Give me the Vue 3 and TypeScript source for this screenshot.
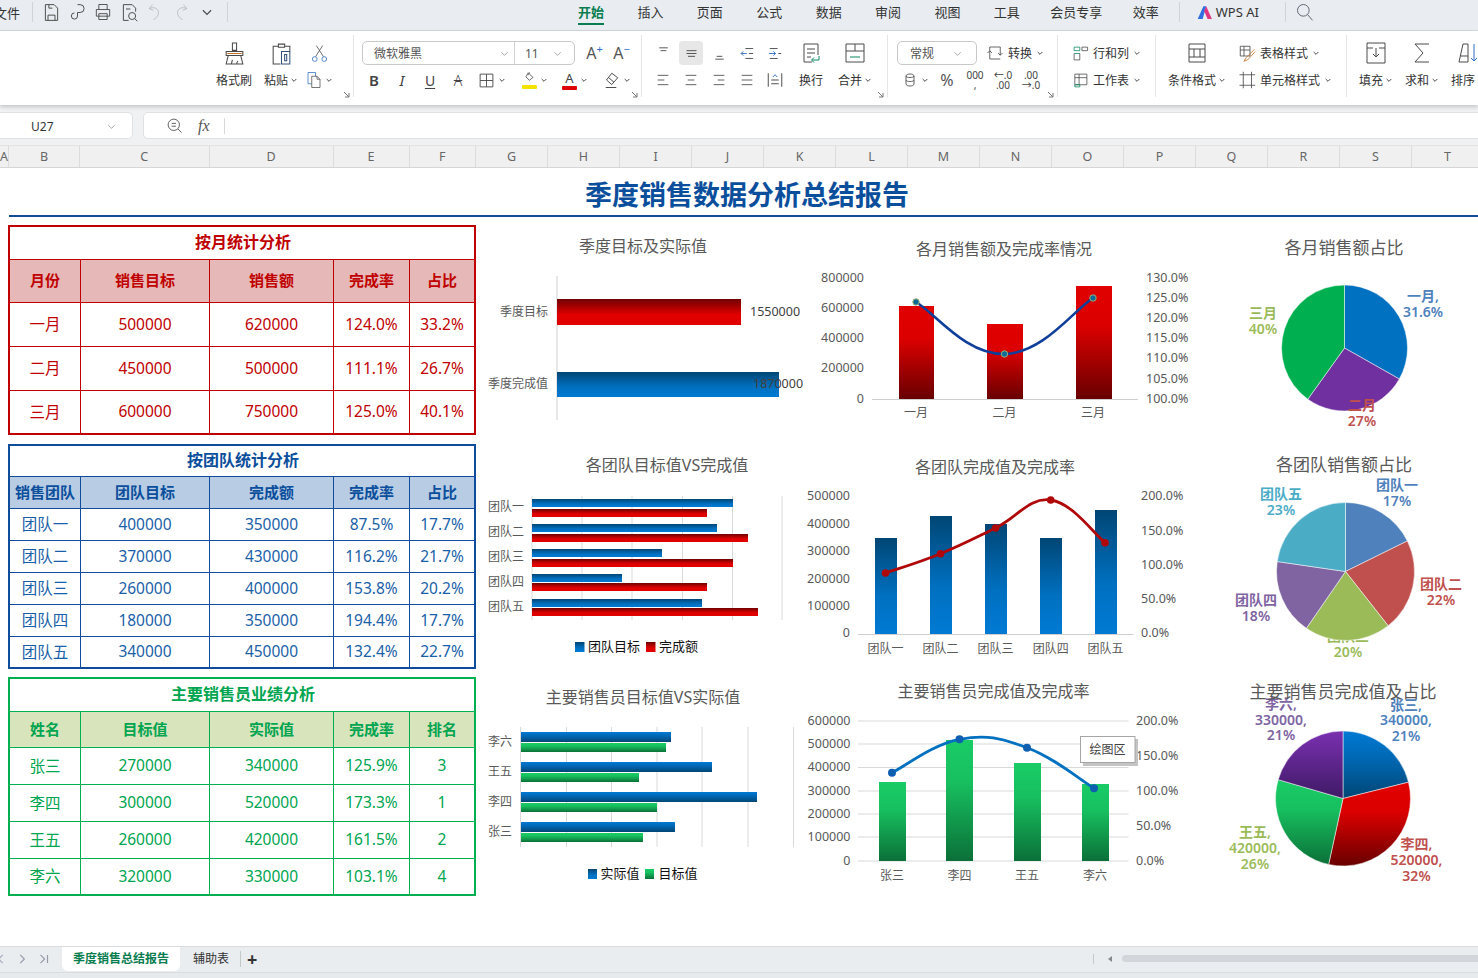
<script setup lang="ts">
import { h } from 'vue'
import type { FunctionalComponent } from 'vue'

/* ---------- icons ---------- */
type Seg = [string, string?, string?]
const G = '#0a8a5c', B = '#2f6fc4', O = '#c9762b'
const icons: Record<string, Seg[]> = {
  save: [['M5 3h10l4 4v14H5z M8 21v-6h8v6 M9 3v4h4']],
  link: [['M12 3h3a4 4 0 0 1 0 9h-3v4a3.5 3.5 0 1 1-3.5-3.5']],
  print: [['M7 9V3h10v6 M4 9h16v8H4z M7 14h10v7H7z']],
  preview: [['M11 21H5V3h10l4 4v4 M8 8h5'], ['M15 12a4 4 0 1 0 0 8 4 4 0 0 0 0-8z M18 19l3 3']],
  undo: [['M9 3 5 8l5 2 M5 8c6-3 12 0 11 6-.5 3-3 6-6 7', '#b9bec4']],
  redo: [['M15 3l4 5-5 2 M19 8C13 5 7 8 8 14c.5 3 3 6 6 7', '#b9bec4']],
  chev: [['M5 9l7 7 7-7']],
  search: [['M10 3a7 7 0 1 0 0 14 7 7 0 0 0 0-14z M15 15l6 7']],
  ai: [['M1 21 9 3h4L8 21z', 'none', '#2f6fe0'], ['M13 3l8 18h-6L10 10z', 'none', '#e0357f']],
  brush: [['M10 2h4v7h-4z M4 10h16v4H4z M6 14l-2 8h16l-2-8 M9 22l1-4 M14 22l1-3'], ['M5 12h14', O]],
  paste: [['M9 3h6v3H9z M9 5H4v17h7 M15 5h5v5'], ['M12 10h8v12h-8z M15 13h2v6h-2z', '#33527a']],
  cut: [['M8 2l9 14 M16 2 7 16'], ['M6 16a3 3 0 1 0 0 6 3 3 0 0 0 0-6z M18 16a3 3 0 1 0 0 6 3 3 0 0 0 0-6z', B]],
  copy: [['M4 2h10v5 M4 2v15h5', B], ['M9 7h7l4 4v11H9z M16 7v4h4']],
  border: [['M3 3h18v18H3z M12 3v18 M3 12h18']],
  bucket: [['M9 3l8 8-6 5-6-6z M12 3c-2 0-3 2-3 4']],
  erase: [['M13 3l8 6-8 9-7-6z M9 9l7 6 M5 22h14']],
  at: [['M6 4h12 M8 8h8']],
  am: [['M5 8h14 M5 12h14 M7 16h10']],
  ab: [['M8 16h8 M6 20h12']],
  l1: [['M4 5h16 M4 12h10 M4 19h16']],
  l2: [['M4 5h16 M7 12h10 M4 19h16']],
  l3: [['M4 5h16 M10 12h10 M4 19h16']],
  l4: [['M4 5h16 M4 12h16 M4 19h16']],
  ind1: [['M9 5h11 M14 12h6 M9 19h11'], ['M11 12H3 M6 9l-3 3 3 3', B]],
  ind2: [['M4 5h11 M4 19h11 M16 12h4'], ['M3 12h9 M9 9l3 3-3 3', B]],
  dist: [['M3 3v18 M21 3v18 M7 12h10 M7 17h10'], ['M9 8l3-3 3 3', B]],
  wrap: [['M5 3h14v11 M5 3v18h8 M8 8h8 M8 12h8 M8 16h4'], ['M20 15v4h-7 M15 16.5 12.5 19l2.5 2.5', G]],
  merge: [['M3 3h18v18H3z M3 10h18 M12 3v7'], ['M7 16h10', G]],
  convert: [['M5 9V4h14v11 M16 12l3 3 3-3 M19 20H5V9 M2 12l3-3 3 3']],
  db: [['M6 6c0-4 12-4 12 0v12c0 4-12 4-12 0z M6 6c0 3 12 3 12 0 M6 12c0 3 12 3 12 0']],
  rowcol: [['M3 3h8v5H3z M3 12h8', G], ['M3 12v9h8v-9 M14 3h8v5h-8z']],
  sheet: [['M4 3h17v15H4z M4 8h17 M10 3v15'], ['M4 18h7v3H4z', G]],
  tstyle: [['M3 3h13v13H3z M3 8h13 M8 3v13'], ['M22 7 11 18l-3 5 5-2L23 10', O]],
  cstyle: [['M7 1v22 M18 1v22 M2 5h21 M2 19h21']],
  cond: [['M4 3h16v18H4z M4 8h5 M15 8h5 M4 16h5 M15 16h5 M9 8h6v8H9z']],
  fill: [['M3 2h18v20H3z M3 7h6 M15 7h6 M12 7v9 M9 13l3 3 3-3']],
  sum: [['M19 3H5l8 9-8 9h14']],
  sort: [['M3 21 7 3h5v18H3z M5 15h7'], ['M18 3v17 M15 17l3 3 3-3', B]],
  left: [['M15 5l-7 7 7 7']],
  right: [['M9 5l7 7-7 7']],
  last: [['M6 5l7 7-7 7 M18 5v14']],
  zoom: [['M11 3a8 8 0 1 0 0 16 8 8 0 0 0 0-16z M17 17l5 5 M8 9h6 M8 13h6']]
}
const Ic: FunctionalComponent<{ n: string; s?: number; sw?: number; c?: string }> = (p) =>
  h('svg', { width: p.s ?? 16, height: p.s ?? 16, viewBox: '0 0 24 24', style: 'flex:none;display:block' },
    icons[p.n].map(([d, c, f]) =>
      h('path', { d, fill: f ?? 'none', stroke: c ?? p.c ?? '#4a4a4a', 'stroke-width': p.sw ?? 1.3 })))

/* ---------- sheet header ---------- */
const cols: [string, number][] = [['A', 9], ['B', 71], ['C', 129.5], ['D', 124], ['E', 76], ['F', 66.5],
  ...'GHIJKLMNOPQRST'.split('').map((l): [string, number] => [l, 72])]
const menu = ['插入', '页面', '公式', '数据', '审阅', '视图', '工具', '会员专享', '效率']

/* ---------- tables ---------- */
const tables = [
  { cls: 't-red', title: '按月统计分析', head: ['月份', '销售目标', '销售额', '完成率', '占比'],
    h: [33, 43, 44, 44, 42],
    rows: [['一月', '500000', '620000', '124.0%', '33.2%'], ['二月', '450000', '500000', '111.1%', '26.7%'], ['三月', '600000', '750000', '125.0%', '40.1%']] },
  { cls: 't-blue', title: '按团队统计分析', head: ['销售团队', '团队目标', '完成额', '完成率', '占比'],
    h: [31, 32, 32, 32, 32, 32, 30],
    rows: [['团队一', '400000', '350000', '87.5%', '17.7%'], ['团队二', '370000', '430000', '116.2%', '21.7%'], ['团队三', '260000', '400000', '153.8%', '20.2%'], ['团队四', '180000', '350000', '194.4%', '17.7%'], ['团队五', '340000', '450000', '132.4%', '22.7%']] },
  { cls: 't-green', title: '主要销售员业绩分析', head: ['姓名', '目标值', '实际值', '完成率', '排名'],
    h: [33, 36, 37, 37, 37, 35],
    rows: [['张三', '270000', '340000', '125.9%', '3'], ['李四', '300000', '520000', '173.3%', '1'], ['王五', '260000', '420000', '161.5%', '2'], ['李六', '320000', '330000', '103.1%', '4']] }
]

/* ---------- chart primitives ---------- */
interface Item { t: 'text' | 'rect' | 'path' | 'circle'; x?: number; y?: number; w?: number; h?: number; r?: number; s?: string; cls?: string; a?: string; d?: string; fill?: string; stroke?: string; sw?: number; op?: number }
const GREY = '#595959', GRID = '#d9d9d9'
const tx = (x: number, y: number, s: string, cls = 'ax', a = 'middle', fill = GREY): Item => ({ t: 'text', x, y: y - 0.8, s, cls, a, fill })
const rc = (x: number, y: number, x2: number, y2: number, fill: string, stroke?: string): Item => ({ t: 'rect', x, y, w: x2 - x, h: y2 - y, fill, stroke })
const ln = (d: string, stroke = GRID, sw = 1): Item => ({ t: 'path', d, stroke, sw, fill: 'none' })
const dot = (x: number, y: number, r: number, fill: string, stroke = 'none', sw = 0): Item => ({ t: 'circle', x, y, r, fill, stroke, sw })
function smooth(p: number[][], k = 0.2): string {
  let d = `M${p[0][0]} ${p[0][1]}`
  for (let i = 0; i < p.length - 1; i++) {
    const a = p[Math.max(i - 1, 0)], b = p[i], c = p[i + 1], e = p[Math.min(i + 2, p.length - 1)]
    d += `C${b[0] + (c[0] - a[0]) * k} ${b[1] + (c[1] - a[1]) * k} ${c[0] - (e[0] - b[0]) * k} ${c[1] - (e[1] - b[1]) * k} ${c[0]} ${c[1]}`
  }
  return d
}
function pie(cx: number, cy: number, r: number, v: number[], fills: string[]): Item[] {
  const total = v.reduce((a, b) => a + b, 0)
  let acc = 0
  return v.map((n, i) => {
    const a0 = (acc / total) * 2 * Math.PI
    acc += n
    const a1 = (acc / total) * 2 * Math.PI
    const large = a1 - a0 > Math.PI ? 1 : 0
    const pt = (a: number) => `${cx + r * Math.sin(a)} ${cy - r * Math.cos(a)}`
    return { t: 'path', d: `M${cx} ${cy}L${pt(a0)}A${r} ${r} 0 ${large} 1 ${pt(a1)}Z`, fill: fills[i], stroke: '#ffffff', sw: 0.5 } as Item
  })
}
const plab = (x: number, ys: number[], ss: string[], fill: string): Item[] =>
  ss.map((s, i) => tx(x, ys[i], s, 'pl', 'middle', fill))
const C_BLUE = '#4f81bd', C_RED = '#c0504d', C_GRN = '#9bbb59', C_PUR = '#8064a2', C_CY = '#4bacc6'
const gDR = 'url(#gDR)', gRD = 'url(#gRD)', gBU = 'url(#gBU)', gBD = 'url(#gBD)', gGD = 'url(#gGD)', gPD = 'url(#gPD)'

const charts: { box: number[]; items: Item[] }[] = [
  { box: [480, 230, 325, 220], items: [
    tx(643, 247, '季度目标及实际值', 'tt'),
    ln('M557 276V420', '#cfcfcf'),
    rc(557, 299, 741, 325, gDR), rc(557, 372, 779, 397, gBU),
    tx(548, 312, '季度目标', 'ax12', 'end'), tx(548, 384, '季度完成值', 'ax12', 'end'),
    tx(750, 312, '1550000', 'ax', 'start', '#404040'), tx(753, 384, '1870000', 'ax', 'start', '#404040')
  ] },
  { box: [805, 230, 395, 220], items: [
    tx(1004, 250, '各月销售额及完成率情况', 'tt'),
    ...[['800000', 278], ['600000', 308], ['400000', 338], ['200000', 368], ['0', 399]].map(([s, y]) => tx(864, y as number, s as string, 'ax', 'end')),
    ...[['130.0%', 278], ['125.0%', 298], ['120.0%', 318], ['115.0%', 338], ['110.0%', 358], ['105.0%', 379], ['100.0%', 399]].map(([s, y]) => tx(1146, y as number, s as string, 'ax', 'start')),
    ln('M872 399.5H1138', '#cfcfcf'),
    rc(899, 306, 934, 399, gRD), rc(987, 324, 1023, 399, gRD), rc(1076, 286, 1112, 399, gRD),
    ln(smooth([[916, 302], [1004.5, 354], [1093, 298]], 0.22), '#0f3f9b', 2.6),
    dot(916, 302, 3.2, '#0a6a9a', '#9ab070', 1), dot(1004.5, 354, 3.2, '#0a6a9a', '#9ab070', 1), dot(1093, 298, 3.2, '#0a6a9a', '#9ab070', 1),
    tx(916, 413, '一月', 'ax12'), tx(1004.5, 413, '二月', 'ax12'), tx(1093, 413, '三月', 'ax12')
  ] },
  { box: [1200, 230, 278, 220], items: [
    tx(1344, 248, '各月销售额占比', 'pt'),
    ...pie(1344.5, 348, 63, [33.2, 26.7, 40.1], ['#0070c0', '#7030a0', '#00b050']),
    ...plab(1423, [296, 312], ['一月,', '31.6%'], C_BLUE),
    ...plab(1362, [405, 421], ['二月', '27%'], C_RED),
    ...plab(1263, [313, 329], ['三月', '40%'], C_GRN)
  ] },
  { box: [480, 450, 325, 225], items: [
    tx(667, 466, '各团队目标值VS完成值', 'tt'),
    ...[532, 582, 632, 682.5, 732.5, 782].map((x) => ln(`M${x} 496V620`)),
    ...[733, 717, 662, 622, 702].map((e, i) => rc(532, [499, 524, 549, 574, 599][i], e, [507, 532, 557, 582, 607][i], gBU)),
    ...[707, 748, 733, 707, 758].map((e, i) => rc(532, [509, 534, 559, 583, 608][i], e, [517, 542, 567, 591, 616][i], gDR)),
    ...['团队一', '团队二', '团队三', '团队四', '团队五'].map((s, i) => tx(524, [507, 532, 557, 582, 607][i], s, 'ax12', 'end')),
    rc(575, 642, 584.5, 652, gBU), tx(588, 647, '团队目标', 'lg', 'start', '#111'),
    rc(646, 642, 655.5, 652, gDR), tx(659, 647, '完成额', 'lg', 'start', '#111')
  ] },
  { box: [805, 450, 395, 225], items: [
    tx(995, 468, '各团队完成值及完成率', 'tt'),
    ...[['500000', 496], ['400000', 524], ['300000', 551], ['200000', 579], ['100000', 606], ['0', 633]].map(([s, y]) => tx(850, y as number, s as string, 'ax', 'end')),
    ...[['200.0%', 496], ['150.0%', 531], ['100.0%', 565], ['50.0%', 599], ['0.0%', 633]].map(([s, y]) => tx(1141, y as number, s as string, 'ax', 'start')),
    ln('M858 634.5H1133.5', '#cfcfcf'),
    ...[[875, 538], [930, 516], [985, 524], [1040, 538], [1095, 510]].map(([x, y]) => rc(x, y, x + 22, 634, gBU)),
    ln(smooth([[885.5, 573], [940.5, 553.7], [995.6, 528], [1050.7, 500], [1105, 542.7]]), '#b00808', 2.8),
    ...[[885.5, 573], [940.5, 553.7], [995.6, 528], [1050.7, 500], [1105, 542.7]].map(([x, y]) => dot(x, y, 3.8, '#b00808')),
    ...['团队一', '团队二', '团队三', '团队四', '团队五'].map((s, i) => tx([885.5, 940.5, 995.6, 1050.7, 1105.5][i], 649, s, 'ax12'))
  ] },
  { box: [1200, 450, 278, 225], items: [
    tx(1344, 465, '各团队销售额占比', 'pt'),
    ...plab(1397, [485.5, 501], ['团队一', '17%'], C_BLUE),
    ...plab(1441, [584, 600], ['团队二', '22%'], C_RED),
    ...plab(1348, [636, 652], ['团队三', '20%'], C_GRN),
    ...plab(1256, [600, 616], ['团队四', '18%'], C_PUR),
    ...plab(1281, [494, 510], ['团队五', '23%'], C_CY),
    ...pie(1345.5, 571.5, 69, [17.7, 21.7, 20.2, 17.7, 22.7], [C_BLUE, C_RED, C_GRN, C_PUR, C_CY])
  ] },
  { box: [480, 675, 325, 220], items: [
    tx(643, 698, '主要销售员目标值VS实际值', 'tt'),
    ...[520.5, 566.5, 611.5, 657, 702, 748, 793.5].map((x) => ln(`M${x} 727V847`)),
    ...[671, 712, 757, 675].map((e, i) => rc(521, [732, 762, 792, 822][i], e, [742, 772, 802, 832][i], gBD)),
    ...[666, 639, 657, 643].map((e, i) => rc(521, [743, 773, 803, 833][i], e, [752, 782, 812, 842][i], gGD)),
    ...['李六', '王五', '李四', '张三'].map((s, i) => tx(512, [742, 772, 802, 832][i], s, 'ax12', 'end')),
    rc(588, 869, 597, 879, gBU), tx(600.5, 874, '实际值', 'lg', 'start', '#111'),
    rc(645, 869, 654, 879, gGD), tx(658.5, 874, '目标值', 'lg', 'start', '#111')
  ] },
  { box: [805, 675, 395, 220], items: [
    tx(993.5, 692, '主要销售员完成值及完成率', 'tt'),
    ...[721, 744, 767.5, 791, 814, 837, 861].map((y) => ln(`M858 ${y}H1128.5`)),
    ...[['600000', 721], ['500000', 744], ['400000', 767.5], ['300000', 791], ['200000', 814], ['100000', 837], ['0', 861]].map(([s, y]) => tx(850.5, y as number, s as string, 'ax', 'end')),
    ...[['200.0%', 721], ['150.0%', 756], ['100.0%', 791], ['50.0%', 826], ['0.0%', 861]].map(([s, y]) => tx(1136, y as number, s as string, 'ax', 'start')),
    ...[[879, 782], [946, 740], [1014, 763], [1082, 784]].map(([x, y]) => rc(x, y, x + 27, 861, gGD)),
    ln(smooth([[892, 772.7], [959.5, 739.3], [1027, 747.7], [1094, 788.3]]), '#0070c0', 2.8),
    ...[[892, 772.7], [959.5, 739.3], [1027, 747.7], [1094, 788.3]].map(([x, y]) => dot(x, y, 4, '#0f5fb0')),
    ...['张三', '李四', '王五', '李六'].map((s, i) => tx([892, 959.5, 1027, 1095][i], 876, s, 'ax12')),
    rc(1083, 739, 1138, 766, '#c4c4c4'),
    rc(1080.5, 736.5, 1135, 762.5, '#ffffff', '#a6a6a6'),
    tx(1107.5, 750, '绘图区', 'ax12', 'middle', '#404040')
  ] },
  { box: [1200, 675, 278, 220], items: [
    ...plab(1406, [705, 720, 736], ['张三,', '340000,', '21%'], C_BLUE),
    ...plab(1281, [704, 720, 735], ['李六,', '330000,', '21%'], C_PUR),
    tx(1343, 692, '主要销售员完成值及占比', 'pt'),
    ...pie(1343, 798.5, 67.5, [340, 520, 420, 330], [gBD, gRD, gGD, gPD]),
    ...plab(1255, [832, 848, 864], ['王五,', '420000,', '26%'], C_GRN),
    ...plab(1416.5, [844, 860, 876], ['李四,', '520000,', '32%'], C_RED)
  ] }
]
</script>

<template>
  <div class="app">
    <!-- hidden gradient definitions shared by all charts -->
    <svg class="defs" width="0" height="0">
      <defs>
        <linearGradient id="gDR" x1="0" y1="0" x2="0" y2="1"><stop offset="0" stop-color="#700000" /><stop offset=".6" stop-color="#e00000" /><stop offset="1" stop-color="#e00000" /></linearGradient>
        <linearGradient id="gRD" x1="0" y1="0" x2="0" y2="1"><stop offset="0" stop-color="#e00000" /><stop offset=".35" stop-color="#dc0000" /><stop offset="1" stop-color="#680000" /></linearGradient>
        <linearGradient id="gBU" x1="0" y1="0" x2="0" y2="1"><stop offset="0" stop-color="#004674" /><stop offset=".6" stop-color="#0070c0" /><stop offset="1" stop-color="#007ad4" /></linearGradient>
        <linearGradient id="gBD" x1="0" y1="0" x2="0" y2="1"><stop offset="0" stop-color="#007ad4" /><stop offset=".4" stop-color="#0068b4" /><stop offset="1" stop-color="#004674" /></linearGradient>
        <linearGradient id="gGD" x1="0" y1="0" x2="0" y2="1"><stop offset="0" stop-color="#19cc66" /><stop offset=".35" stop-color="#17bf5f" /><stop offset="1" stop-color="#0b7038" /></linearGradient>
        <linearGradient id="gPD" x1="0" y1="0" x2="0" y2="1"><stop offset="0" stop-color="#7a30b0" /><stop offset="1" stop-color="#3f1a66" /></linearGradient>
      </defs>
    </svg>

    <header class="menubar">
      <div class="qa">
        <span class="file">文件</span>
        <i class="vsep first"></i>
        <span class="qi"><Ic n="save" :s="21" :sw="1.1" /></span>
        <span class="qi"><Ic n="link" :s="21" :sw="1.1" /></span>
        <span class="qi"><Ic n="print" :s="20" :sw="1.1" /></span>
        <span class="qi"><Ic n="preview" :s="21" :sw="1.1" /></span>
        <span class="qi"><Ic n="undo" :s="20" :sw="1.1" /></span>
        <span class="qi"><Ic n="redo" :s="20" :sw="1.1" /></span>
        <span class="qi"><Ic n="chev" :s="14" :sw="2" /></span>
        <i class="vsep"></i>
      </div>
      <nav class="tabs-top">
        <span class="mt active">开始</span>
        <span v-for="m in menu" :key="m" class="mt" :class="{ wide: m.length > 2 }">{{ m }}</span>
      </nav>
      <i class="vsep v-ai"></i>
      <span class="ai"><Ic n="ai" :s="17" /><span>WPS AI</span></span>
      <i class="vsep v-s"></i>
      <span class="srch"><Ic n="search" :s="20" :sw="1.2" :c="'#667'" /></span>
    </header>

    <section class="ribbon">
      <div class="grp g-clip">
        <div class="big w40"><span class="bi"><Ic n="brush" :s="25" :sw="1" /></span><span class="lb">格式刷</span></div>
        <div class="big w40 m7"><span class="bi"><Ic n="paste" :s="25" :sw="1" /></span><span class="lb">粘贴<Ic n="chev" :s="8" :sw="3" /></span></div>
        <div class="big w36"><span class="bi"><Ic n="cut" :s="19" :sw="1" /></span><span class="lb"><Ic n="copy" :s="18" :sw="1" /><Ic n="chev" :s="8" :sw="3" /></span></div>
        <svg class="corner" width="6" height="6" viewBox="0 0 6 6"><path d="M0 0l5 5M5 1v4H1" fill="none" stroke="#777" /></svg>
      </div>

      <div class="grp g-font">
        <div class="row">
          <div class="sel s-font"><span class="fname">微软雅黑</span><Ic n="chev" :s="11" :sw="1.6" :c="'#888'" /><i class="sel-div"></i><span class="fsize">11</span><Ic n="chev" :s="11" :sw="1.6" :c="'#888'" /></div>
          <span class="aa a-first">A<sup class="plus">+</sup></span>
          <span class="aa">A<sup class="plus">−</sup></span>
        </div>
        <div class="row r2 off-2">
          <span class="b28 fb">B</span>
          <span class="b28 fi">I</span>
          <span class="b28 fu">U</span>
          <span class="b28 fs">A</span>
          <span class="b40"><Ic n="border" :s="17" :sw="1.3" /><Ic n="chev" :s="8" :sw="3" /></span>
          <span class="b40 m3"><span class="fillb"><Ic n="bucket" :s="14" :sw="1.4" /><i class="bar yellow"></i></span><Ic n="chev" :s="8" :sw="3" /></span>
          <span class="b40"><span class="fillb"><span class="fa">A</span><i class="bar red"></i></span><Ic n="chev" :s="8" :sw="3" /></span>
          <span class="b40 m1"><Ic n="erase" :s="18" :sw="1.3" /><Ic n="chev" :s="8" :sw="3" /></span>
        </div>
        <svg class="corner" width="6" height="6" viewBox="0 0 6 6"><path d="M0 0l5 5M5 1v4H1" fill="none" stroke="#777" /></svg>
      </div>

      <div class="grp g-align">
        <div class="stack">
          <div class="row">
            <span class="b28"><Ic n="at" :s="17" /></span>
            <span class="b28"><span class="on"><Ic n="am" :s="17" /></span></span>
            <span class="b28"><Ic n="ab" :s="17" /></span>
            <span class="b28"><Ic n="ind1" :s="17" /></span>
            <span class="b28"><Ic n="ind2" :s="17" /></span>
          </div>
          <div class="row r2">
            <span class="b28"><Ic n="l1" :s="16" /></span>
            <span class="b28"><Ic n="l2" :s="16" /></span>
            <span class="b28"><Ic n="l3" :s="16" /></span>
            <span class="b28"><Ic n="l4" :s="16" /></span>
            <span class="b28"><Ic n="dist" :s="18" /></span>
          </div>
        </div>
        <div class="big w44"><span class="bi"><Ic n="wrap" :s="24" :sw="1" /></span><span class="lb">换行</span></div>
        <div class="big w44"><span class="bi"><Ic n="merge" :s="24" :sw="1" /></span><span class="lb">合并<Ic n="chev" :s="8" :sw="3" /></span></div>
        <svg class="corner" width="6" height="6" viewBox="0 0 6 6"><path d="M0 0l5 5M5 1v4H1" fill="none" stroke="#777" /></svg>
      </div>

      <div class="grp g-num">
        <div class="row">
          <div class="sel s-num"><span>常规</span><Ic n="chev" :s="11" :sw="1.6" :c="'#888'" /></div>
          <span class="tb conv"><Ic n="convert" :s="18" :sw="1.1" /><span>转换</span><Ic n="chev" :s="8" :sw="3" /></span>
        </div>
        <div class="row r2">
          <span class="b36"><Ic n="db" :s="16" :sw="1.3" /><Ic n="chev" :s="8" :sw="3" /></span>
          <span class="b28 pct">%</span>
          <span class="b28 two"><b>000</b><b>,</b></span>
          <span class="b28 two"><b>←.0</b><b>.00</b></span>
          <span class="b28 two"><b>.00</b><b>→.0</b></span>
        </div>
        <svg class="corner" width="6" height="6" viewBox="0 0 6 6"><path d="M0 0l5 5M5 1v4H1" fill="none" stroke="#777" /></svg>
      </div>

      <div class="grp g-rows">
        <div class="row"><span class="tb"><Ic n="rowcol" :s="17" :sw="1.1" /><span>行和列</span><Ic n="chev" :s="8" :sw="3" /></span></div>
        <div class="row r2"><span class="tb"><Ic n="sheet" :s="17" :sw="1.1" /><span>工作表</span><Ic n="chev" :s="8" :sw="3" /></span></div>
      </div>

      <div class="grp g-cond">
        <div class="big w62"><span class="bi"><Ic n="cond" :s="24" :sw="1" /></span><span class="lb">条件格式<Ic n="chev" :s="8" :sw="3" /></span></div>
        <div class="stack m10">
          <div class="row"><span class="tb"><Ic n="tstyle" :s="18" :sw="1.1" /><span>表格样式</span><Ic n="chev" :s="8" :sw="3" /></span></div>
          <div class="row r2"><span class="tb"><Ic n="cstyle" :s="18" :sw="1.1" /><span>单元格样式</span><Ic n="chev" :s="8" :sw="3" /></span></div>
        </div>
      </div>

      <div class="grp g-fill">
        <div class="big w46"><span class="bi"><Ic n="fill" :s="24" :sw="1" /></span><span class="lb">填充<Ic n="chev" :s="8" :sw="3" /></span></div>
        <div class="big w46"><span class="bi"><Ic n="sum" :s="24" :sw="1" /></span><span class="lb">求和<Ic n="chev" :s="8" :sw="3" /></span></div>
        <div class="big w46"><span class="bi"><Ic n="sort" :s="24" :sw="1" /></span><span class="lb">排序<Ic n="chev" :s="8" :sw="3" /></span></div>
      </div>
    </section>

    <section class="fbar">
      <div class="namebox"><span>U27</span><Ic n="chev" :s="11" :sw="1.6" :c="'#888'" /></div>
      <div class="formula"><Ic n="zoom" :s="17" :c="'#555'" /><span class="fx">fx</span><i class="fdiv"></i></div>
    </section>

    <section class="colhdr">
      <span v-for="c in cols" :key="c[0]" class="ch" :style="{ width: c[1] + 'px' }">{{ c[0] }}</span>
    </section>

    <main class="sheet">
      <h1 class="title">季度销售数据分析总结报告</h1>
      <div class="rule"></div>
      <div class="content">
        <div class="tables">
          <div v-for="t in tables" :key="t.title" class="tw" :class="t.cls">
            <table>
              <colgroup><col class="c1" /><col class="c2" /><col class="c3" /><col class="c4" /><col class="c5" /></colgroup>
              <tbody>
                <tr class="tr-title" :style="{ height: t.h[0] + 'px' }"><td colspan="5">{{ t.title }}</td></tr>
                <tr class="tr-head" :style="{ height: t.h[1] + 'px' }"><td v-for="c in t.head" :key="c">{{ c }}</td></tr>
                <tr v-for="(r, i) in t.rows" :key="i" class="tr-row" :style="{ height: t.h[i + 2] + 'px' }"><td v-for="(c, j) in r" :key="j">{{ c }}</td></tr>
              </tbody>
            </table>
          </div>
        </div>
        <div class="charts">
          <svg v-for="(c, n) in charts" :key="n" class="chart" :width="c.box[2]" :height="c.box[3]" :viewBox="c.box.join(' ')">
            <template v-for="(it, i) in c.items" :key="i">
              <text v-if="it.t === 'text'" :x="it.x" :y="it.y" :class="it.cls" :text-anchor="it.a" :fill="it.fill" dominant-baseline="central">{{ it.s }}</text>
              <rect v-else-if="it.t === 'rect'" :x="it.x" :y="it.y" :width="it.w" :height="it.h" :fill="it.fill" :stroke="it.stroke" />
              <path v-else-if="it.t === 'path'" :d="it.d" :fill="it.fill" :stroke="it.stroke" :stroke-width="it.sw" />
              <circle v-else :cx="it.x" :cy="it.y" :r="it.r" :fill="it.fill" :stroke="it.stroke" :stroke-width="it.sw" />
            </template>
          </svg>
        </div>
      </div>
    </main>

    <footer class="tabs">
      <div class="nav">
        <span class="nv"><Ic n="left" :s="14" :sw="2" :c="'#aab'" /></span>
        <span class="nv"><Ic n="right" :s="14" :sw="2" :c="'#99a'" /></span>
        <span class="nv"><Ic n="last" :s="14" :sw="2" :c="'#99a'" /></span>
      </div>
      <span class="tab active">季度销售总结报告</span>
      <span class="tab">辅助表</span>
      <i class="tdiv"></i>
      <span class="plus-tab">+</span>
      <i class="tdiv d2"></i>
      <span class="tri"></span>
      <div class="scroll"></div>
    </footer>
    <div class="status"></div>
  </div>
</template>

<style scoped>
.app {
  width: 1478px;
  height: 978px;
  overflow: hidden;
  display: flex;
  flex-direction: column;
  position: relative;
  background: #fff;
  font-family: "Noto Sans", "Noto Sans CJK SC", sans-serif;
  color: #333;
}
.defs { position: absolute; }

/* menu bar */
.menubar {
  height: 31px;
  flex: none;
  display: flex;
  align-items: center;
  padding-bottom: 6px;
  background: #e9edf1;
  font-size: 13px;
  border-bottom: 1px solid #d5d9dd;
  box-sizing: border-box;
}
.qa { width: 578px; flex: none; display: flex; align-items: center; }
.file { margin-left: -6px; width: 27px; white-space: nowrap; }
.vsep { width: 1px; height: 20px; background: #cfd4d9; display: block; flex: none; }
.vsep.first { margin-left: 11px; margin-right: 5px; }
.qi { width: 26px; display: flex; justify-content: center; }
.qi + .vsep { margin-left: 7px; }
.tabs-top { display: flex; gap: 33.4px; height: 24px; align-items: center; flex: none; }
.mt { position: relative; white-space: nowrap; line-height: 24px; }
.mt.wide { margin: 0 -3px; }
.mt.active { color: #0a7d50; font-weight: 700; }
.mt.active::after { content: ""; position: absolute; left: 0; right: 0; bottom: -1px; height: 2px; background: #0a7d50; }
.v-ai { margin-left: 20px; }
.ai { margin-left: 17px; display: flex; align-items: center; gap: 2px; white-space: nowrap; width: 88px; }
.srch { margin-left: 9px; }

/* ribbon */
.ribbon {
  height: 74px;
  flex: none;
  display: flex;
  background: #fff;
  box-shadow: 0 2px 4px rgba(0, 0, 0, .18);
  position: relative;
  z-index: 2;
  overflow: hidden;
  font-size: 12px;
}
.grp {
  flex: none;
  display: flex;
  position: relative;
  box-sizing: border-box;
  height: 62px;
  margin-top: 4px;
  padding-top: 6px;
  border-right: 1px solid #e3e5e7;
}
.g-clip { width: 354px; padding-left: 214px; }
.g-font { width: 288px; padding-left: 8px; flex-direction: column; }
.g-align { width: 246px; padding-left: 7px; }
.g-num { width: 170px; padding-left: 9px; flex-direction: column; }
.g-rows { width: 98px; padding-left: 14px; flex-direction: column; }
.g-cond { width: 191px; padding-left: 10px; }
.g-fill { width: 140px; padding-left: 6px; border: 0; }
.corner { position: absolute; right: 3px; bottom: -1px; }

.big { display: flex; flex-direction: column; align-items: center; flex: none; }
.bi { height: 24px; display: flex; align-items: center; justify-content: center; }
.lb { height: 24px; margin-top: 3px; display: flex; align-items: center; gap: 2px; white-space: nowrap; color: #333; }
.w36 { width: 36px; } .w40 { width: 40px; } .w44 { width: 44px; } .w46 { width: 46px; } .w62 { width: 62px; }
.m7 { margin-left: 7px; } .m10 { margin-left: 10px; } .m3 { margin-left: 3px; } .m1 { margin-left: 1px; }

.stack { display: flex; flex-direction: column; flex: none; }
.row { display: flex; align-items: center; height: 24px; flex: none; }
.r2 { margin-top: 3px; }
.off-2 { margin-left: -2px; }
.b28, .b36, .b40 { height: 24px; display: flex; align-items: center; justify-content: center; flex: none; gap: 3px; }
.b28 { width: 28px; } .b36 { width: 36px; } .b40 { width: 40px; }
.on { width: 24px; height: 24px; border-radius: 4px; background: #e7e7e7; display: flex; align-items: center; justify-content: center; }

.sel { height: 24px; box-sizing: border-box; border: 1px solid #c9c9c9; border-radius: 5px; display: flex; align-items: center; flex: none; color: #555; }
.s-font { width: 213px; padding-left: 11px; }
.fname { width: 125px; }
.sel-div { width: 1px; height: 22px; background: #d4d4d4; margin-left: 4px; }
.fsize { width: 37px; padding-left: 10px; box-sizing: border-box; }
.s-num { width: 80px; padding-left: 12px; gap: 18px; }
.aa { width: 27px; font-size: 16px; text-align: center; color: #555; line-height: 24px; position: relative; white-space: nowrap; }
.a-first { margin-left: 6px; }
.plus { font-size: 11px; color: #2f6fc4; line-height: 0; }
.fb { font-weight: 600; font-size: 15px; color: #444; }
.fi { font-style: italic; font-size: 15px; color: #444; }
.fu { text-decoration: underline; text-underline-offset: 2px; font-size: 14px; color: #444; }
.fs { text-decoration: line-through; font-size: 14px; font-weight: 300; color: #444; }
.fillb { display: flex; flex-direction: column; align-items: center; width: 15px; }
.fa { font-size: 13px; line-height: 15px; color: #444; }
.bar { display: block; width: 15px; height: 4px; border-radius: 1px; }
.yellow { background: #f2e400; border: 0; }
.red { background: #dd0000; }
.pct { font-size: 16px; color: #555; }
.two { flex-direction: column; gap: 0; }
.two b { font-weight: 400; font-size: 10px; line-height: 10px; color: #444; }
.tb { display: flex; align-items: center; gap: 4px; white-space: nowrap; color: #333; font-size: 12px; }
.conv { margin-left: 9px; }

/* formula bar */
.fbar {
  height: 41px;
  flex: none;
  box-sizing: border-box;
  padding: 7px 0 6px;
  display: flex;
  background: #eff1f3;
  border-bottom: 1px solid #e0e2e4;
  font-size: 12px;
}
.namebox {
  width: 143px;
  margin-left: -10px;
  flex: none;
  background: #fff;
  border: 1px solid #dfe1e3;
  border-radius: 5px;
  box-sizing: border-box;
  display: flex;
  align-items: center;
  padding-left: 40px;
  padding-top: 1px;
}
.namebox span { width: 75px; }
.formula {
  margin-left: 10px;
  width: 1345px;
  flex: none;
  background: #fff;
  border: 1px solid #dfe1e3;
  border-radius: 5px;
  box-sizing: border-box;
  display: flex;
  align-items: center;
  padding-left: 22px;
}
.fx { font-family: "Liberation Serif", serif; font-style: italic; font-size: 16px; color: #555; margin-left: 15px; width: 20px; }
.fdiv { width: 1px; height: 16px; background: #d8d8d8; margin-left: 6px; }

/* column header */
.colhdr {
  height: 22px;
  flex: none;
  display: flex;
  background: #f0f0f0;
  border-bottom: 1px solid #d6d6d6;
  box-sizing: border-box;
}
.ch {
  flex: none;
  box-sizing: border-box;
  border-right: 1px solid #dcdcdc;
  text-align: center;
  font-size: 12.5px;
  line-height: 22px;
  color: #666;
}

/* sheet */
.sheet { flex: 1; min-height: 0; overflow: hidden; background: #fff; }
.title {
  margin: 0;
  height: 47px;
  line-height: 54px;
  font-size: 27px;
  font-weight: 700;
  color: #0b4f9c;
  padding-left: 585px;
  white-space: nowrap;
}
.rule { height: 2px; background: #0f4e96; margin-left: 9px; }
.content { display: flex; padding-top: 8px; }
.tables { width: 480px; flex: none; padding-left: 8px; box-sizing: border-box; }
.tw { width: 468px; border: 2px solid; box-sizing: border-box; }
.tw + .tw { margin-top: 9px; }
.tw:last-child { margin-top: 8px; }
table { width: 464px; border-collapse: separate; border-spacing: 0; table-layout: fixed; }
.c1 { width: 71px; } .c2 { width: 129px; } .c3 { width: 124px; } .c4 { width: 76px; } .c5 { width: 64px; }
td { box-sizing: border-box; padding: 0 0 2px; text-align: center; border-right: 1px solid; border-bottom: 1px solid; white-space: nowrap; font-size: 15.5px; }
td:last-child { border-right: 0; }
tr:last-child td { border-bottom: 0; }
.tr-title td { font-size: 16px; font-weight: 700; padding-bottom: 4px; padding-left: 2px; }
.tr-head td { font-size: 15px; font-weight: 700; padding-bottom: 3px; }

.t-red { border-color: #c00000; }
.t-red td { border-color: #c00000; color: #c00000; }
.t-red .tr-head td { background: #e6b8b7; }
.t-blue { border-color: #0f4c9c; }
.t-blue td { border-color: #0f4c9c; color: #1a5fa8; }
.t-blue .tr-title td, .t-blue .tr-head td { color: #0b4f9c; }
.t-blue .tr-head td { background: #b8cce4; }
.t-green { border-color: #00b050; }
.t-green td { border-color: #00b050; color: #00a550; }
.t-green .tr-head td { background: #d8e4bc; }

/* charts */
.charts {
  margin-top: 5px;
  display: grid;
  grid-template-columns: 325px 395px 278px;
  grid-template-rows: 220px 225px 220px;
}
.chart { display: block; }
.tt { font-size: 16px; }
.pt { font-size: 17px; }
.ax { font-size: 12.5px; }
.ax12 { font-size: 12px; }
.lg { font-size: 13px; }
.pl { font-size: 14px; font-weight: 600; }

/* sheet tabs */
.tabs {
  height: 26px;
  flex: none;
  box-sizing: border-box;
  display: flex;
  align-items: flex-start;
  background: #e9edf0;
  border-top: 1px solid #d8dcdf;
  font-size: 12px;
}
.nav { width: 72px; flex: none; display: flex; height: 24px; align-items: center; margin-left: -10px; }
.nv { width: 21.5px; display: flex; justify-content: center; }
.tab { flex: none; height: 24px; line-height: 23px; white-space: nowrap; padding: 0 14px 0 13px; color: #333; }
.tab.active {
  width: 118px;
  box-sizing: border-box;
  padding: 0 0 0 11px;
  background: #fff;
  color: #0a7d50;
  font-weight: 700;
  border-radius: 0 0 6px 6px;
}
.tdiv { width: 1px; height: 16px; margin-top: 4px; background: #c4c9ce; display: block; flex: none; margin-left: -3px; }
.plus-tab { flex: none; font-size: 18px; line-height: 24px; font-weight: 700; color: #333; margin-left: 6px; }
.d2 { margin-left: 836px; height: 10px; margin-top: 7px; }
.tri { flex: none; width: 0; height: 0; border-style: solid; border-width: 3px 4px 3px 0; border-color: transparent #888 transparent transparent; margin: 9px 0 0 14px; }
.scroll { width: 360px; height: 7px; background: #d2d6da; border-radius: 4px; margin: 8px 0 0 10px; flex: none; }
.status { height: 6px; flex: none; background: #e6eaed; border-top: 1px solid #d8dcdf; box-sizing: border-box; }
</style>
<style>
html, body { margin: 0; padding: 0; background: #fff; }
</style>
